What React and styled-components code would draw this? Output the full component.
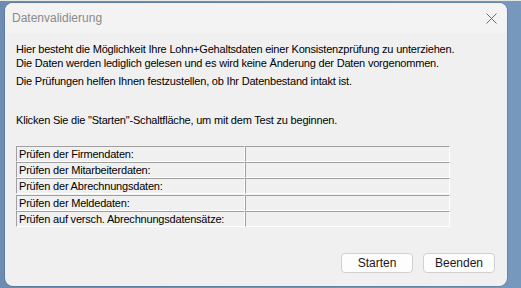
import React from "react";
import styled, { createGlobalStyle } from "styled-components";

const GlobalStyle = createGlobalStyle`
  html, body {
    margin: 0;
    padding: 0;
  }
  body {
    width: 521px;
    height: 288px;
    overflow: hidden;
    background: #e4e4e4;
  }
`;

const Desktop = styled.div`
  width: 521px;
  height: 288px;
  box-sizing: border-box;
  padding: 2px 14px 2px 5px;
  background: linear-gradient(90deg, #6c8cb2 0%, #7798bd 100%);
  border-top: 1px solid #e6e6e6;
  display: flex;
`;

const Dialog = styled.div`
  flex: 1;
  display: flex;
  flex-direction: column;
  background: #f0f0f0;
  border-radius: 8px;
  box-shadow: 0 0 0 1px rgba(0, 0, 0, 0.12);
  overflow: hidden;
`;

const TitleBar = styled.div`
  height: 30px;
  display: flex;
  align-items: center;
  justify-content: space-between;
  padding: 0 9px 0 7px;
  background: #f3f3f3;
  font-family: "Liberation Sans", Arial, sans-serif;
  font-size: 12px;
  color: #8a8a8a;
`;

const CloseButton = styled.div`
  width: 14px;
  height: 14px;
  display: flex;
  align-items: center;
  justify-content: center;
`;

const Content = styled.div`
  flex: 1;
  padding: 9px 11px 0 11px;
  font-family: "Liberation Sans", Arial, sans-serif;
  font-size: 11px;
  letter-spacing: -0.2px;
  color: #000;
`;

const Paragraph = styled.p`
  margin: 0 0 ${(p) => p.$gap || 4}px 0;
  line-height: 14px;
  white-space: nowrap;
`;

const Table = styled.div`
  width: 434px;
  display: flex;
  flex-direction: column;
`;

const Row = styled.div`
  display: grid;
  grid-template-columns: 229px 205px;
  height: 16px;
  margin-top: ${(p) => (p.$spaced ? 1 : 0)}px;
`;

const Cell = styled.div`
  box-sizing: border-box;
  border-top: 1px solid #a0a0a0;
  border-left: 1px solid #a0a0a0;
  border-right: 1px solid #ffffff;
  border-bottom: 1px solid #ffffff;
  padding-left: 2px;
  line-height: 14px;
  white-space: nowrap;
  overflow: hidden;
`;

const Footer = styled.div`
  display: flex;
  justify-content: flex-end;
  gap: 10px;
  padding: 0 12px 13px 0;
`;

const Button = styled.button`
  width: 72px;
  height: 20px;
  padding: 0;
  background: #fdfdfd;
  border: 1px solid #d0d0d0;
  border-radius: 4px;
  font-family: "Liberation Sans", Arial, sans-serif;
  font-size: 12px;
  color: #1a1a1a;
  line-height: 18px;
`;

const checks = [
  "Prüfen der Firmendaten:",
  "Prüfen der Mitarbeiterdaten:",
  "Prüfen der Abrechnungsdaten:",
  "Prüfen der Meldedaten:",
  "Prüfen auf versch. Abrechnungsdatensätze:",
];

const App = () => {
  return (
    <>
      <GlobalStyle />
      <Desktop>
        <Dialog>
          <TitleBar>
            <span>Datenvalidierung</span>
            <CloseButton>
              <svg width="11" height="11" viewBox="0 0 11 11">
                <path d="M0.5 0.5 L10.5 10.5 M10.5 0.5 L0.5 10.5" stroke="#6a6a6a" strokeWidth="1" />
              </svg>
            </CloseButton>
          </TitleBar>
          <Content>
            <Paragraph $gap={4}>
              Hier besteht die Möglichkeit Ihre Lohn+Gehaltsdaten einer Konsistenzprüfung zu unterziehen.
              <br />
              Die Daten werden lediglich gelesen und es wird keine Änderung der Daten vorgenommen.
            </Paragraph>
            <Paragraph $gap={25}>
              Die Prüfungen helfen Ihnen festzustellen, ob Ihr Datenbestand intakt ist.
            </Paragraph>
            <Paragraph $gap={19}>
              Klicken Sie die "Starten"-Schaltfläche, um mit dem Test zu beginnen.
            </Paragraph>
            <Table>
              {checks.map((label, i) => (
                <Row key={label} $spaced={i === 3}>
                  <Cell>{label}</Cell>
                  <Cell />
                </Row>
              ))}
            </Table>
          </Content>
          <Footer>
            <Button>Starten</Button>
            <Button>Beenden</Button>
          </Footer>
        </Dialog>
      </Desktop>
    </>
  );
};

export default App;
